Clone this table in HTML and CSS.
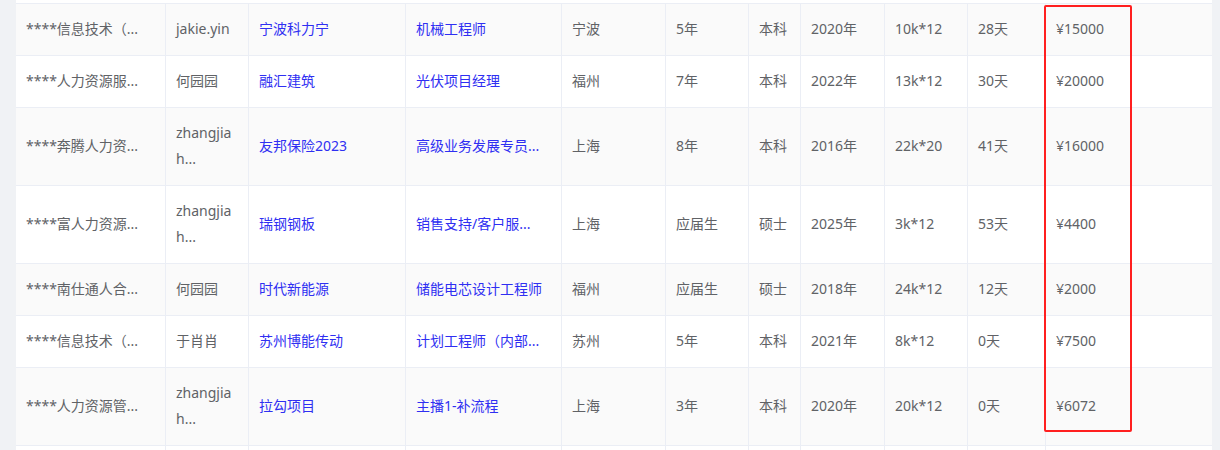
FILE: index.html
```html
<!DOCTYPE html>
<html lang="zh-CN">
<head>
<meta charset="utf-8">
<title>Table</title>
<link rel="stylesheet" href="styles.css">
</head>
<body>
<div class="page">
  <div class="table-wrap">
    <div class="prev-row"></div>
    <table class="grid">
      <colgroup>
        <col class="c1"><col class="c2"><col class="c3"><col class="c4"><col class="c5"><col class="c6"><col class="c7"><col class="c8"><col class="c9"><col class="c10"><col class="c11">
      </colgroup>
      <tbody>
        <tr class="odd">
          <td>****信息技术（...</td><td class="wrap">jakie.yin</td><td class="link">宁波科力宁</td><td class="link">机械工程师</td><td>宁波</td><td>5年</td><td>本科</td><td>2020年</td><td>10k*12</td><td>28天</td><td class="last">¥15000</td>
        </tr>
        <tr>
          <td>****人力资源服...</td><td class="wrap">何园园</td><td class="link">融汇建筑</td><td class="link">光伏项目经理</td><td>福州</td><td>7年</td><td>本科</td><td>2022年</td><td>13k*12</td><td>30天</td><td class="last">¥20000</td>
        </tr>
        <tr class="odd">
          <td>****奔腾人力资...</td><td class="wrap">zhangjiah...</td><td class="link">友邦保险2023</td><td class="link">高级业务发展专员...</td><td>上海</td><td>8年</td><td>本科</td><td>2016年</td><td>22k*20</td><td>41天</td><td class="last">¥16000</td>
        </tr>
        <tr>
          <td>****富人力资源...</td><td class="wrap">zhangjiah...</td><td class="link">瑞钢钢板</td><td class="link">销售支持/客户服...</td><td>上海</td><td>应届生</td><td>硕士</td><td>2025年</td><td>3k*12</td><td>53天</td><td class="last">¥4400</td>
        </tr>
        <tr class="odd">
          <td>****南仕通人合...</td><td class="wrap">何园园</td><td class="link">时代新能源</td><td class="link">储能电芯设计工程师</td><td>福州</td><td>应届生</td><td>硕士</td><td>2018年</td><td>24k*12</td><td>12天</td><td class="last">¥2000</td>
        </tr>
        <tr>
          <td>****信息技术（...</td><td class="wrap">于肖肖</td><td class="link">苏州博能传动</td><td class="link">计划工程师（内部...</td><td>苏州</td><td>5年</td><td>本科</td><td>2021年</td><td>8k*12</td><td>0天</td><td class="last">¥7500</td>
        </tr>
        <tr class="odd">
          <td>****人力资源管...</td><td class="wrap">zhangjiah...</td><td class="link">拉勾项目</td><td class="link">主播1-补流程</td><td>上海</td><td>3年</td><td>本科</td><td>2020年</td><td>20k*12</td><td>0天</td><td class="last">¥6072</td>
        </tr>
        <tr>
          <td>&nbsp;</td><td class="wrap">&nbsp;</td><td>&nbsp;</td><td>&nbsp;</td><td>&nbsp;</td><td>&nbsp;</td><td>&nbsp;</td><td>&nbsp;</td><td>&nbsp;</td><td>&nbsp;</td><td class="last">&nbsp;</td>
        </tr>
      </tbody>
    </table>
  </div>
  <div class="highlight-box"></div>
</div>
</body>
</html>
```

FILE: styles.css
```css
html, body {
  margin: 0;
  padding: 0;
  overflow: hidden;
  background: #f0f2f5;
}

.page {
  position: relative;
  width: 1220px;
  height: 450px;
  overflow: hidden;
  padding-left: 16px;
  box-sizing: border-box;
  font-family: "Noto Sans", "Noto Sans CJK SC", sans-serif;
  font-size: 14px;
  color: #606266;
}

.table-wrap {
  width: 1196px;
  background: #ffffff;
}

.prev-row {
  height: 3px;
  border-bottom: 1px solid #ebeef5;
  background: #ffffff;
}

.grid {
  border-collapse: separate;
  border-spacing: 0;
  table-layout: fixed;
  width: 1196px;
}

.c1 { width: 150px; }
.c2 { width: 83px; }
.c3 { width: 157px; }
.c4 { width: 156px; }
.c5 { width: 104px; }
.c6 { width: 83px; }
.c7 { width: 52px; }
.c8 { width: 84px; }
.c9 { width: 83px; }
.c10 { width: 78px; }
.c11 { width: 166px; }

.grid td {
  padding: 12px 10px 13px 10px;
  line-height: 26px;
  border-right: 1px solid #ebeef5;
  border-bottom: 1px solid #ebeef5;
  white-space: nowrap;
  overflow: hidden;
  vertical-align: middle;
  text-align: left;
}

.grid td.wrap {
  white-space: normal;
  word-break: break-all;
}

.grid td.last {
  border-right: none;
}

.grid tr.odd td {
  background: #fafafa;
}

.grid td.link {
  color: #2f2ff2;
}

.highlight-box {
  position: absolute;
  left: 1044px;
  top: 5px;
  width: 84px;
  height: 423px;
  border: 2px solid #ff1f1f;
  border-radius: 2px;
}
```
